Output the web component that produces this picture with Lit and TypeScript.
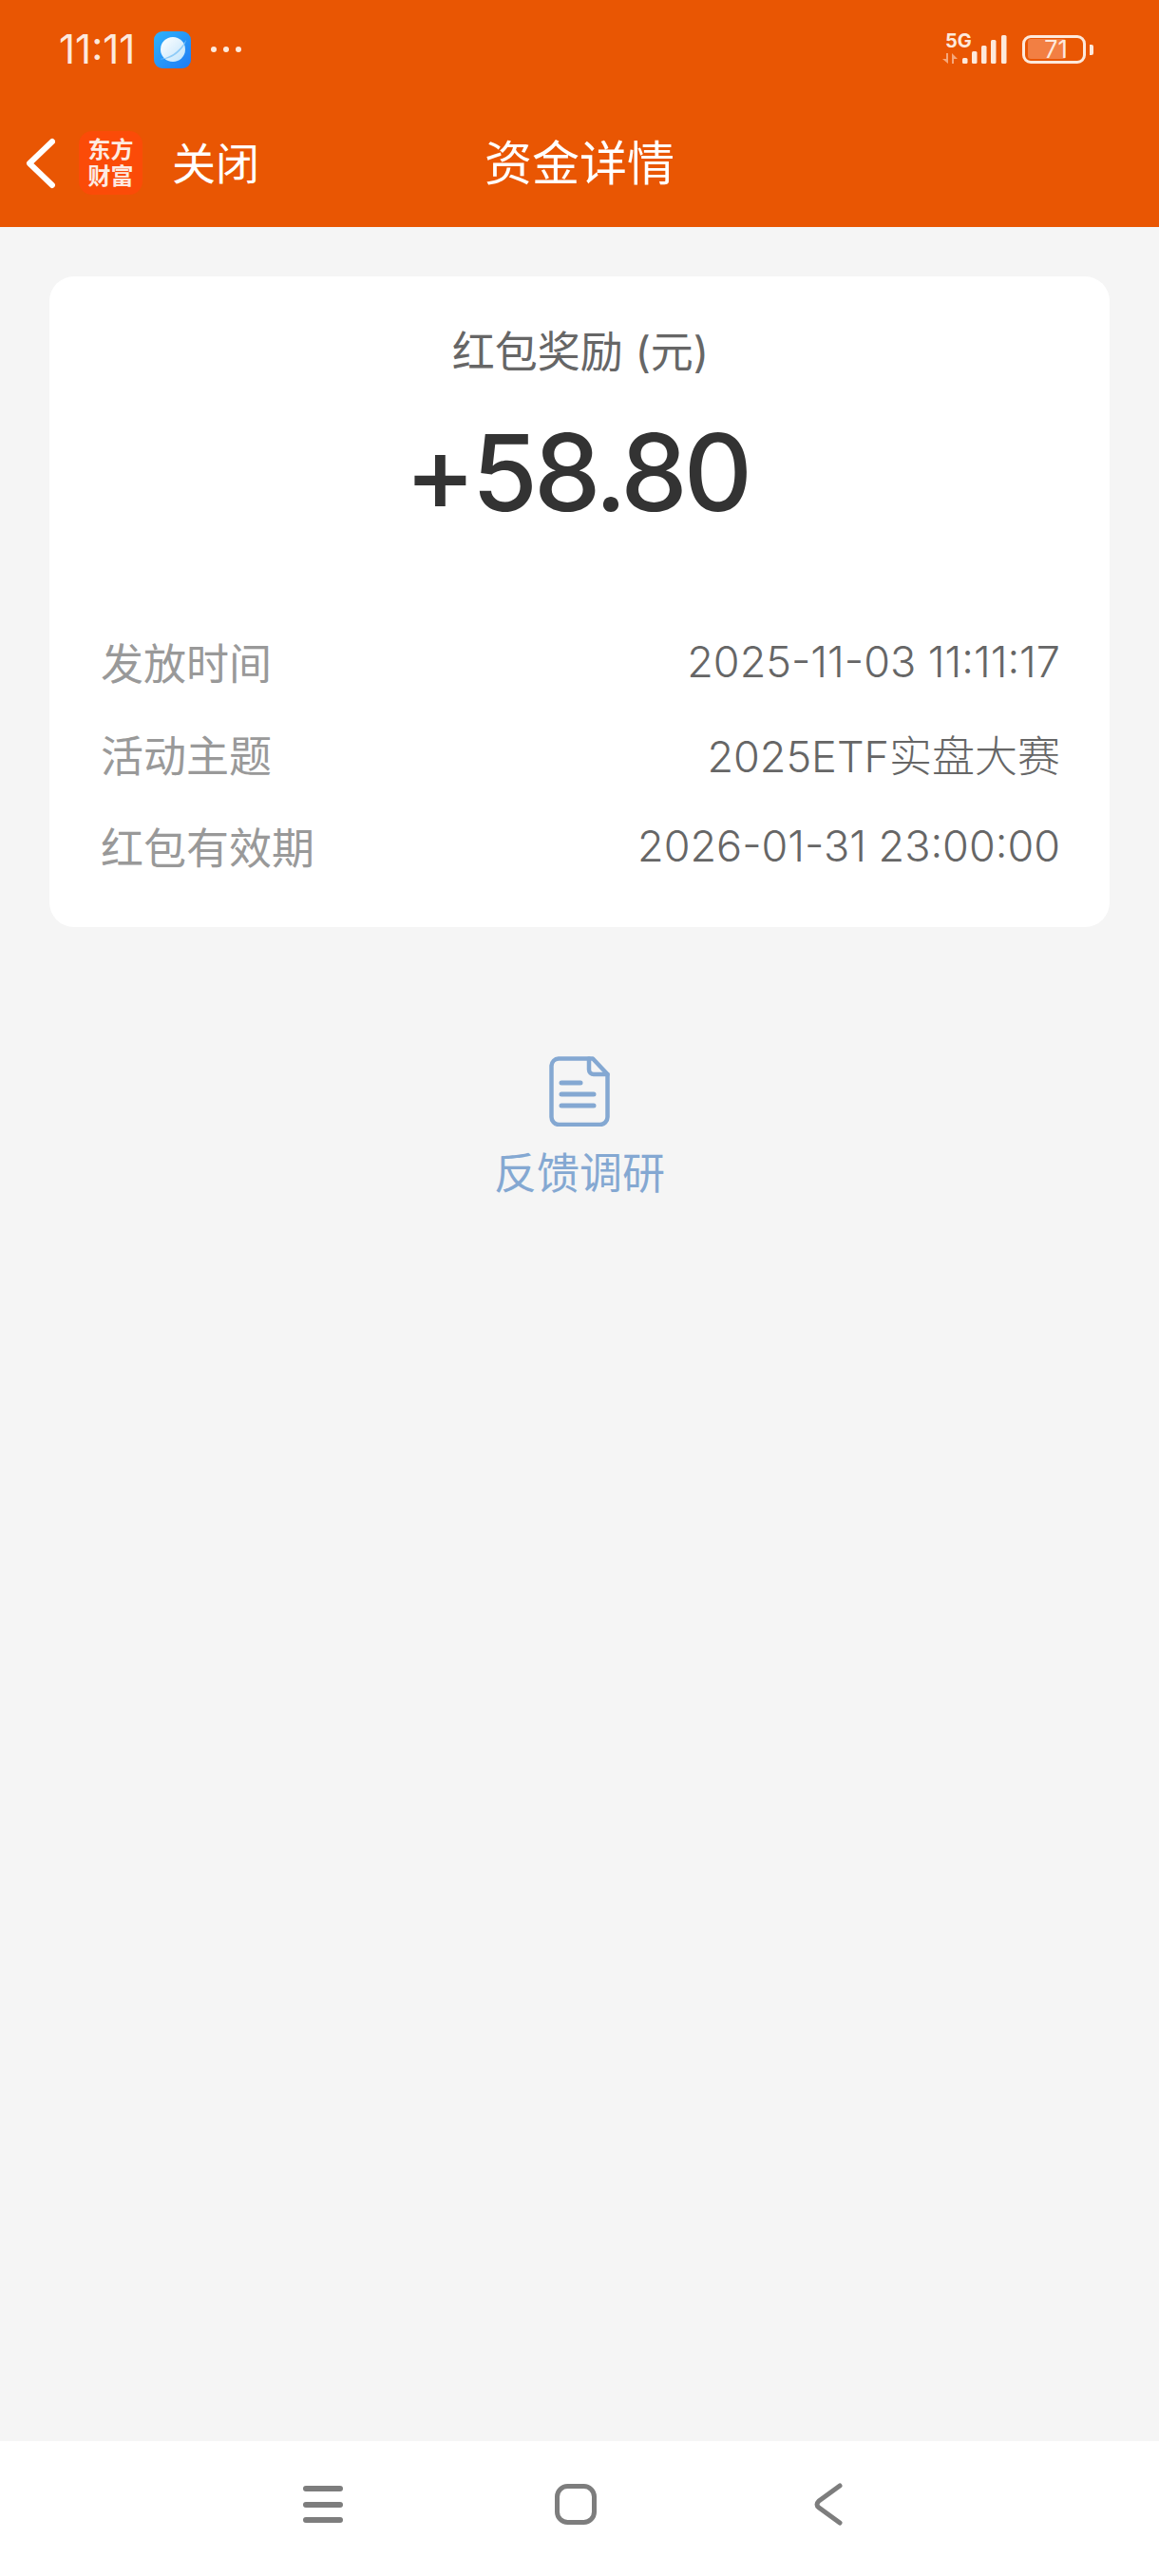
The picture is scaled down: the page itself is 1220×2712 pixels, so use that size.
import { LitElement, html, css } from 'lit'
import { customElement } from 'lit/decorators.js'

const rows = [
  { label: '发放时间', value: '2025-11-03 11:11:17' },
  { label: '活动主题', value: '2025ETF实盘大赛' },
  { label: '红包有效期', value: '2026-01-31 23:00:00' },
]

@customElement('app-root')
export class AppRoot extends LitElement {
  static styles = css`
    :host {
      display: flex;
      flex-direction: column;
      width: 1220px;
      height: 2712px;
      background: #f5f5f5;
      font-family: Inter, 'Noto Sans CJK SC', sans-serif;
    }
    .header {
      background: #e95603;
      height: 239px;
      color: #fff;
      display: flex;
      flex-direction: column;
    }
    .status {
      height: 100px;
      box-sizing: border-box;
      display: flex;
      align-items: center;
      padding: 4px 69px 0 62px;
      flex: none;
    }
    .time {
      font-size: 42px;
      font-weight: 400;
      color: #fde9dc;
      width: 100px;
      line-height: 1;
    }
    .planet {
      display: block;
      margin-right: 20px;
    }
    .spacer {
      flex: 1;
    }
    .net {
      display: block;
      margin-right: 14px;
    }
    .batt {
      position: relative;
      width: 67px;
      height: 30px;
      box-sizing: border-box;
      border: 3px solid #fde9dc;
      border-radius: 9px;
    }
    .batt-fill {
      position: absolute;
      left: 3px;
      top: 1px;
      bottom: 2px;
      width: 40px;
      background: #f27f43;
      border-radius: 3px;
    }
    .batt-num {
      position: absolute;
      inset: 0;
      display: flex;
      align-items: center;
      justify-content: center;
      padding-left: 4px;
      font-size: 25px;
      color: #fde9dc;
      line-height: 1;
    }
    .batt-cap {
      width: 4px;
      height: 11px;
      margin-left: 4px;
      background: #fde9dc;
      border-radius: 0 2px 2px 0;
    }
    .nav {
      position: relative;
      flex: 1;
      display: flex;
      align-items: center;
      padding: 4px 0 0 27px;
    }
    .back {
      display: block;
      margin-right: 25px;
    }
    .logo {
      width: 67px;
      height: 67px;
      border-radius: 14px;
      background: #fb4b08;
      display: flex;
      flex-direction: column;
      align-items: center;
      justify-content: center;
      font-size: 24px;
      font-weight: 700;
      line-height: 28px;
      color: #fdebe2;
      margin-right: 31px;
    }
    .close {
      font-size: 46px;
      line-height: 1;
      font-weight: 400;
    }
    .title {
      position: absolute;
      left: 0;
      right: 0;
      text-align: center;
      font-size: 50px;
      font-weight: 400;
      line-height: 1;
    }
    .card {
      margin: 52px 52px 0;
      height: 685px;
      box-sizing: border-box;
      background: #fff;
      border-radius: 26px;
      padding: 0 52px 0 54px;
      display: flex;
      flex-direction: column;
      flex: none;
    }
    .card-title {
      margin-top: 52px;
      text-align: center;
      font-size: 45px;
      line-height: 56px;
      font-weight: 400;
      color: #666;
    }
    .amount {
      margin-top: 33px;
      padding-right: 8px;
      text-align: center;
      font-size: 112px;
      line-height: 130px;
      font-weight: 500;
      letter-spacing: -4px;
      color: #333;
    }
    .rows {
      margin-top: 106px;
      display: flex;
      flex-direction: column;
      gap: 41px;
    }
    .row {
      display: flex;
      justify-content: space-between;
      align-items: center;
      height: 56px;
    }
    .label {
      color: #999;
      font-size: 45px;
    }
    .value {
      color: #666;
      font-size: 45px;
      font-weight: 300;
    }
    .feedback {
      margin-top: 136px;
      display: flex;
      flex-direction: column;
      align-items: center;
      color: #84a8d2;
      flex: none;
    }
    .feedback svg {
      display: block;
    }
    .feedback span {
      margin-top: 22px;
      font-size: 45px;
      line-height: 56px;
      font-weight: 400;
    }
    .bottom {
      margin-top: auto;
      height: 142px;
      background: #fff;
      flex: none;
    }
    .bottom svg {
      display: block;
    }
  `

  render() {
    return html`
      <div class="header">
        <div class="status">
          <span class="time">11:11</span>
          <svg class="planet" width="39" height="39" viewBox="0 0 39 39">
            <defs>
              <linearGradient id="pb" x1="0" y1="0" x2="1" y2="1">
                <stop offset="0" stop-color="#2fb2fb" />
                <stop offset="1" stop-color="#1f7bf5" />
              </linearGradient>
              <linearGradient id="pw" x1="0" y1="0" x2="1" y2="1">
                <stop offset="0" stop-color="#ffffff" />
                <stop offset="1" stop-color="#bfe3fb" />
              </linearGradient>
            </defs>
            <rect width="39" height="39" rx="9" fill="url(#pb)" />
            <circle cx="20" cy="19" r="13" fill="url(#pw)" />
            <path d="M6 29 C14 29 27 22 34 9 C32 18 20 31 6 29Z" fill="#8ecbf7" />
          </svg>
          <svg width="34" height="10" viewBox="0 0 34 10">
            <circle cx="4" cy="5" r="3" fill="#fde9dc" />
            <circle cx="17" cy="5" r="3" fill="#fde9dc" />
            <circle cx="30" cy="5" r="3" fill="#fde9dc" />
          </svg>
          <span class="spacer"></span>
          <svg class="net" width="70" height="44" viewBox="0 -4 70 44">
            <text x="3" y="16" font-family="Inter" font-weight="700" font-size="20" fill="#fde9dc">5G</text>
            <path d="M6 22 V33 L0 28 H4 V22 Z M10 33 V22 L16 28 H12 V33 Z" fill="#f5a77a" />
            <rect x="21" y="27" width="5.5" height="6" rx="1.5" fill="#fde9dc" />
            <rect x="31" y="20" width="5.5" height="13" rx="1.5" fill="#fde9dc" />
            <rect x="41" y="14" width="5.5" height="19" rx="1.5" fill="#fde9dc" />
            <rect x="51" y="8" width="5.5" height="25" rx="1.5" fill="#fde9dc" />
            <rect x="62" y="3" width="5.5" height="30" rx="1.5" fill="#fde9dc" />
          </svg>
          <div class="batt">
            <div class="batt-fill"></div>
            <div class="batt-num">71</div>
          </div>
          <div class="batt-cap"></div>
        </div>
        <div class="nav">
          <svg class="back" width="31" height="56" viewBox="0 0 31 56" fill="none">
            <path d="M28 5 L4 28 L28 51" stroke="#fff" stroke-width="6" stroke-linecap="round" stroke-linejoin="round" />
          </svg>
          <div class="logo"><div>东方</div><div>财富</div></div>
          <span class="close">关闭</span>
          <span class="title">资金详情</span>
        </div>
      </div>

      <div class="card">
        <div class="card-title">红包奖励 (元)</div>
        <div class="amount">+58.80</div>
        <div class="rows">
          ${rows.map(
            (r) => html`
              <div class="row">
                <span class="label">${r.label}</span>
                <span class="value">${r.value}</span>
              </div>
            `
          )}
        </div>
      </div>

      <div class="feedback">
        <svg width="64" height="74" viewBox="0 0 64 74" fill="none" stroke="#84a8d2" stroke-width="4.5" stroke-linecap="round" stroke-linejoin="round">
          <path d="M10 2.5 H46 L61.5 19 V64 a8 8 0 0 1 -8 8 H10 a8 8 0 0 1 -7.5 -8 V10 a8 8 0 0 1 7.5 -7.5 Z" />
          <path d="M42 2.5 V14 a5 5 0 0 0 5 5 H61.5" />
          <path d="M13 28 H33 M13 40 H47 M13 52 H47" stroke-width="5" />
        </svg>
        <span>反馈调研</span>
      </div>

      <div class="bottom">
        <svg width="1220" height="142" viewBox="0 0 1220 142" fill="none" stroke="#7d7d7d" stroke-linecap="round" stroke-linejoin="round">
          <path d="M322 50 H358 M322 67 H358 M322 83 H358" stroke-width="6" />
          <rect x="586.5" y="47.5" width="39" height="38" rx="11" stroke-width="5" />
          <path d="M884 47 L862 63 Q858 67 862 70 L884 86" stroke-width="5" />
        </svg>
      </div>
    `
  }
}

declare global {
  interface HTMLElementTagNameMap {
    'app-root': AppRoot
  }
}
